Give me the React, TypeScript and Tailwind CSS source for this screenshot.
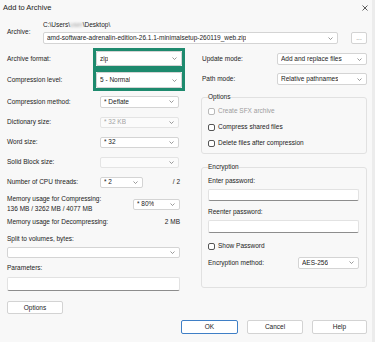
import React from "react";

/* 7-Zip "Add to Archive" dialog, Win11 look */

function Chevron() {
  return (
    <svg width="5" height="3" viewBox="0 0 5 3" className="shrink-0">
      <path d="M0.5 0.5 L2.5 2.5 L4.5 0.5" fill="none" stroke="#6f6f6f" strokeWidth="0.7" />
    </svg>
  );
}

function Combo({
  value,
  className,
  disabled,
}: {
  value?: string;
  className: string;
  disabled?: boolean;
}) {
  return (
    <div
      className={`flex items-center justify-between rounded-[2px] border pl-[3px] pr-[4px] ${
        disabled ? "border-[#e4e4e4] bg-[#fbfbfb] text-[#a3a3a3]" : "border-[#d4d4d4] bg-white"
      } ${className}`}
    >
      <span className="truncate">{value}</span>
      <Chevron />
    </div>
  );
}

function TextBox({ className }: { className: string }) {
  return (
    <div className={`rounded-[2px] border border-[#e2e2e2] border-b-[#8d8d8d] bg-white ${className}`} />
  );
}

function Check({ label, disabled }: { label: string; disabled?: boolean }) {
  return (
    <div className={`flex h-[16px] items-center gap-[3px] ${disabled ? "text-[#9d9d9d]" : ""}`}>
      <div
        className={`h-[7px] w-[7px] rounded-[2px] border bg-white ${
          disabled ? "border-[#b9b9b9]" : "border-[#555]"
        }`}
      />
      <span>{label}</span>
    </div>
  );
}

function Button({ label, className, primary }: { label: string; className: string; primary?: boolean }) {
  return (
    <div
      className={`flex items-center justify-center rounded-[2px] border bg-white ${
        primary ? "border-[#3f7fc6]" : "border-[#d3d3d3]"
      } ${className}`}
    >
      {label}
    </div>
  );
}

function Row({ label, children, className }: { label: string; children: React.ReactNode; className: string }) {
  return (
    <div className={`flex items-center justify-between ${className}`}>
      <span>{label}</span>
      {children}
    </div>
  );
}

export default function App() {
  return (
    <div className="h-[342px] w-[375px] overflow-hidden bg-[#ececec] font-['Liberation_Sans',Arial,sans-serif] text-[6.5px] leading-[8px] text-[#222]">
      <div className="flex h-[342px] w-[372px] flex-col bg-[#f8f8f8]">
        {/* title bar */}
        <div className="flex h-[15px] shrink-0 items-center justify-between pl-[3px] pr-[4px]">
          <span className="text-[7.5px]">Add to Archive</span>
          <svg width="6" height="6" viewBox="0 0 6 6">
            <path d="M0.5 0.5 L5.5 5.5 M5.5 0.5 L0.5 5.5" stroke="#333" strokeWidth="0.8" />
          </svg>
        </div>

        <div className="flex flex-col pl-[7px] pr-[5px]">
          {/* archive path */}
          <div className="mt-[6px] flex items-center">
            <span className="mb-[2px] w-[36px] shrink-0">Archive:</span>
            <div className="flex flex-1 flex-col">
              <div className="flex h-[8px] items-center">
                C:\Users\
                <span className="text-[#a5a5a5] blur-[1px]">user</span>
                \Desktop\
              </div>
              <div className="mt-[3px] flex items-center justify-between">
                <Combo
                  value="amd-software-adrenalin-edition-26.1.1-minimalsetup-260119_web.zip"
                  className="h-[12px] w-[295px]"
                />
                <Button label="..." className="h-[12px] w-[16px] text-[#888]" />
              </div>
            </div>
          </div>

          <div className="flex justify-between">
            {/* left column */}
            <div className="flex w-[178px] flex-col pt-[4px]">
              <Row label="Archive format:" className="h-[21px]">
                <div className="h-[21px] w-[92px] border-[3px] border-[#1e8a6e]">
                  <Combo value="zip" className="h-full w-full" />
                </div>
              </Row>
              <Row label="Compression level:" className="h-[22px]">
                <div className="h-[22px] w-[92px] border-[3px] border-[#1e8a6e]">
                  <Combo value="5 - Normal" className="h-full w-full" />
                </div>
              </Row>
              <Row label="Compression method:" className="h-[21px] pr-[6px]">
                <Combo value="* Deflate" className="h-[12px] w-[79px]" />
              </Row>
              <Row label="Dictionary size:" className="h-[20px] pr-[6px]">
                <Combo value="* 32 KB" disabled className="h-[11px] w-[79px]" />
              </Row>
              <Row label="Word size:" className="h-[20px] pr-[6px]">
                <Combo value="* 32" className="h-[11px] w-[79px]" />
              </Row>
              <Row label="Solid Block size:" className="h-[20px] pr-[6px]">
                <Combo disabled className="h-[11px] w-[79px]" />
              </Row>
              <div className="flex h-[20px] items-center pr-[5px]">
                <span className="w-[93px]">Number of CPU threads:</span>
                <Combo value="* 2" className="h-[11px] w-[43px]" />
                <span className="ml-auto">/ 2</span>
              </div>
              <div className="mt-[2px] flex h-[20px] items-center justify-between pr-[5px]">
                <div className="flex flex-col">
                  <span className="h-[10px] leading-[10px]">Memory usage for Compressing:</span>
                  <span className="h-[10px] leading-[10px]">136 MB / 3262 MB / 4077 MB</span>
                </div>
                <Combo value="* 80%" className="h-[11px] w-[47px]" />
              </div>
              <div className="mt-[3px] flex h-[10px] items-center justify-between pr-[5px]">
                <span>Memory usage for Decompressing:</span>
                <span>2 MB</span>
              </div>
              <span className="mt-[7px] flex h-[10px] items-center">Split to volumes, bytes:</span>
              <Combo className="mt-[3px] h-[11px] w-[173px]" />
              <span className="mt-[5px] flex h-[10px] items-center">Parameters:</span>
              <TextBox className="mt-[4px] h-[14px] w-[173px]" />
            </div>

            {/* right column */}
            <div className="flex w-[166px] flex-col pt-[5px]">
              <Row label="Update mode:" className="h-[20px] pl-[1px]">
                <Combo value="Add and replace files" className="h-[12px] w-[90px]" />
              </Row>
              <Row label="Path mode:" className="h-[20px] pl-[1px]">
                <Combo value="Relative pathnames" className="h-[12px] w-[90px]" />
              </Row>

              <fieldset className="mt-[4px] rounded-[3px] border border-[#e1e1e1] px-[6px] pb-[2px] pt-[2px]">
                <legend className="leading-[8px]">Options</legend>
                <Check label="Create SFX archive" disabled />
                <Check label="Compress shared files" />
                <Check label="Delete files after compression" />
              </fieldset>

              <fieldset className="mt-[9px] flex flex-col rounded-[3px] border border-[#e1e1e1] pb-[18px] pl-[6px] pr-[7px]">
                <legend className="leading-[8px]">Encryption</legend>
                <span className="mt-[5px] flex h-[10px] items-center">Enter password:</span>
                <TextBox className="mt-[3px] h-[12px] w-full" />
                <span className="mt-[6px] flex h-[10px] items-center">Reenter password:</span>
                <TextBox className="mt-[3px] h-[13px] w-full" />
                <div className="mt-[5px]">
                  <Check label="Show Password" />
                </div>
                <Row label="Encryption method:" className="mt-[2px] h-[13px]">
                  <Combo value="AES-256" className="h-[12px] w-[61px]" />
                </Row>
              </fieldset>
            </div>
          </div>

          {/* bottom buttons */}
          <div className="flex items-start justify-between">
            <Button label="Options" className="mt-[10px] h-[13px] w-[56px]" />
            <div className="mt-[29px] flex gap-[9px]">
              <Button label="OK" primary className="h-[14px] w-[57px]" />
              <Button label="Cancel" className="h-[14px] w-[56px]" />
              <Button label="Help" className="h-[14px] w-[55px]" />
            </div>
          </div>
        </div>
      </div>
    </div>
  );
}
